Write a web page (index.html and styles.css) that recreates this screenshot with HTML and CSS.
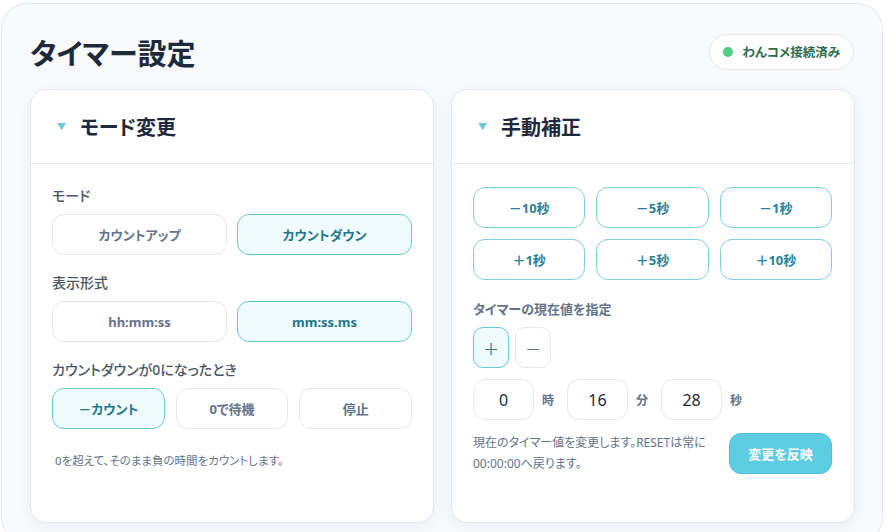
FILE: index.html
```html
<!DOCTYPE html>
<html lang="ja">
<head>
    <meta charset="UTF-8">
    <meta name="viewport" content="width=device-width, initial-scale=1.0">
    <title>タイマー設定</title>
    <link rel="stylesheet" href="styles.css">
</head>
<body>
    <div class="panel">
        <div class="panel-head">
            <h1>タイマー設定</h1>
            <div class="status"><span class="dot"></span>わんコメ接続済み</div>
        </div>

        <div class="cards">
            <section class="card">
                <div class="card-head"><span class="tri">▼</span>モード変更</div>
                <div class="card-body">
                    <div class="label">モード</div>
                    <div class="row two">
                        <button class="opt">カウントアップ</button>
                        <button class="opt active">カウントダウン</button>
                    </div>

                    <div class="label">表示形式</div>
                    <div class="row two">
                        <button class="opt">hh:mm:ss</button>
                        <button class="opt active">mm:ss.ms</button>
                    </div>

                    <div class="label">カウントダウンが0になったとき</div>
                    <div class="row three">
                        <button class="opt active">－カウント</button>
                        <button class="opt">0で待機</button>
                        <button class="opt">停止</button>
                    </div>

                    <p class="note">0を超えて、そのまま負の時間をカウントします。</p>
                </div>
            </section>

            <section class="card">
                <div class="card-head"><span class="tri">▼</span>手動補正</div>
                <div class="card-body">
                    <div class="adjust">
                        <button class="adj">－10秒</button>
                        <button class="adj">－5秒</button>
                        <button class="adj">－1秒</button>
                        <button class="adj">＋1秒</button>
                        <button class="adj">＋5秒</button>
                        <button class="adj">＋10秒</button>
                    </div>

                    <div class="label set-label">タイマーの現在値を指定</div>
                    <div class="signs">
                        <button class="sign active">＋</button>
                        <button class="sign">－</button>
                    </div>
                    <div class="time-inputs">
                        <input class="num" type="text" value="0"><span class="unit">時</span>
                        <input class="num" type="text" value="16"><span class="unit">分</span>
                        <input class="num" type="text" value="28"><span class="unit">秒</span>
                    </div>

                    <div class="apply">
                        <p class="note">現在のタイマー値を変更します。RESETは常に<br>00:00:00へ戻ります。</p>
                        <button class="apply-btn">変更を反映</button>
                    </div>
                </div>
            </section>
        </div>
    </div>
</body>
</html>
```

FILE: styles.css
```css
body {
    margin: 0;
    padding: 3px 10px 0 1px;
    background-color: #ffffff;
    font-family: "Noto Sans", "Noto Sans CJK JP", sans-serif;
    font-feature-settings: "palt";
    color: #1e293b;
}
.panel {
    background-color: #f8fafd;
    border: 1px solid #e2e8f0;
    border-radius: 26px;
    padding: 0 28px 0 28px;
    height: 540px;
    box-sizing: border-box;
}
.panel-head {
    display: flex;
    justify-content: space-between;
    align-items: center;
    height: 75px;
    padding-top: 10px;
}
h1 {
    margin: 0;
    font-size: 29px;
    font-weight: 700;
    color: #1e293b;
}
.status {
    display: flex;
    align-items: center;
    gap: 9px;
    height: 34px;
    padding: 0 13px 0 13px;
    background-color: #ffffff;
    border: 1px solid #e2e8f0;
    border-radius: 18px;
    font-size: 12.5px;
    font-weight: 700;
    color: #2f6b4b;
}
.dot {
    width: 10px;
    height: 10px;
    border-radius: 50%;
    background-color: #4fcf86;
}
.cards {
    display: grid;
    grid-template-columns: 404px 404px;
    gap: 17px;
}
.card {
    background-color: #ffffff;
    border: 1px solid #e2e8f0;
    border-radius: 16px;
    height: 434px;
    box-sizing: border-box;
    box-shadow: 0 4px 14px rgba(148, 163, 184, 0.12);
}
.card-head {
    display: flex;
    align-items: center;
    height: 73px;
    padding-left: 26px;
    border-bottom: 1px solid #e2e8f0;
    font-size: 20px;
    font-weight: 700;
    color: #1e293b;
}
.tri {
    font-size: 9px;
    color: #6cc8dc;
    margin-right: 14px;
}
.card-body {
    padding: 23px 21px 0 21px;
}
.label {
    font-size: 14px;
    font-weight: 500;
    color: #4b5563;
    line-height: 18px;
    margin-bottom: 9px;
}
.row {
    display: grid;
    gap: 10px;
    margin-bottom: 19px;
}
.two {
    grid-template-columns: 1fr 1fr;
}
.three {
    grid-template-columns: 1fr 1fr 1fr;
    gap: 11px;
}
button {
    font-family: "Noto Sans", "Noto Sans CJK JP", sans-serif;
    font-feature-settings: "palt";
    cursor: pointer;
}
.opt {
    height: 41px;
    background-color: #ffffff;
    border: 1px solid #e2e8f0;
    border-radius: 12px;
    font-size: 13px;
    font-weight: 700;
    color: #64748b;
}
.opt.active {
    background-color: #effbfe;
    border-color: #6cc7da;
    color: #26768a;
}
.note {
    margin: 21px 0 0 3px;
    font-size: 11.5px;
    line-height: 21px;
    color: #64748b;
}
.adjust {
    display: grid;
    grid-template-columns: 1fr 1fr 1fr;
    gap: 11px;
    margin-right: 1px;
}
.adj {
    height: 41px;
    background-color: #ffffff;
    border: 1px solid #7fd0df;
    border-radius: 12px;
    font-size: 13px;
    font-weight: 700;
    color: #2a8299;
}
.set-label {
    margin-top: 20px;
    font-size: 13px;
    font-weight: 700;
    color: #64748b;
}
.signs {
    display: flex;
    gap: 6px;
}
.sign {
    width: 36px;
    height: 41px;
    background-color: #ffffff;
    border: 1px solid #e2e8f0;
    border-radius: 10px;
    font-size: 16px;
    color: #64748b;
    padding: 0;
}
.sign.active {
    background-color: #effbfe;
    border-color: #6cc7da;
    color: #26768a;
}
.time-inputs {
    display: flex;
    align-items: center;
    margin-top: 11px;
}
.num {
    width: 61px;
    height: 41px;
    box-sizing: border-box;
    border: 1px solid #e2e8f0;
    border-radius: 12px;
    text-align: center;
    font-family: "Noto Sans", "Noto Sans CJK JP", sans-serif;
    font-size: 16px;
    color: #1e293b;
    padding: 0;
}
.unit {
    font-size: 12px;
    font-weight: 700;
    color: #64748b;
    margin: 0 13px 0 8px;
}
.apply {
    display: flex;
    justify-content: space-between;
    align-items: center;
    margin-top: 12px;
    margin-right: 1px;
}
.apply .note {
    margin: 0;
    font-size: 12px;
}
.apply-btn {
    width: 103px;
    height: 41px;
    background-color: #5ccde3;
    border: 1px solid #4fbfd6;
    border-radius: 12px;
    color: #ffffff;
    font-size: 13px;
    font-weight: 700;
}
```
